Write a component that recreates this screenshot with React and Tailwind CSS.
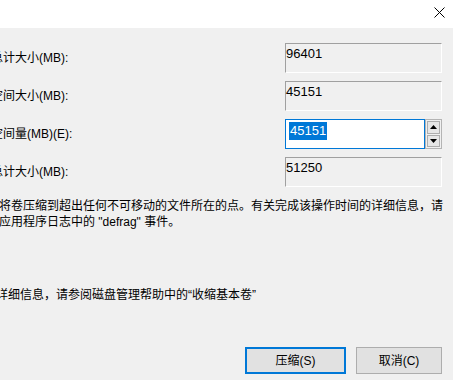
import React from "react";

const font = { fontFamily: '"Liberation Sans", "Noto Sans CJK SC", sans-serif' };

function ReadBox({ value }) {
  return (
    <div className="w-[157px] h-[30px] bg-[#f0f0f0] border-t border-l border-b border-r border-t-[#a0a0a0] border-l-[#a0a0a0] border-b-white border-r-white pl-[0px] text-[13px] leading-[16px] pt-[2px] text-black">
      {value}
    </div>
  );
}

function SpinBox() {
  return (
    <div className="w-[157px] h-[30px] flex">
      <div className="w-[140px] h-[30px] bg-white border border-[#0078d7] pl-[3px] pt-[1px] text-[13px]">
        <span className="bg-[#0078d7] text-white inline-block leading-[18px] px-[1px]">45151</span>
      </div>
      <div className="w-[17px] h-[30px] border border-[#b4b4b4] bg-[#f0f0f0] p-[1px] flex flex-col gap-[1px]">
        <div className="flex-1 bg-[#e6e6e6] border border-[#adadad] flex items-center justify-center">
          <svg width="7" height="4" viewBox="0 0 7 4"><path d="M0 4 L3.5 0 L7 4 Z" fill="#000" /></svg>
        </div>
        <div className="flex-1 bg-[#e6e6e6] border border-[#adadad] flex items-center justify-center">
          <svg width="7" height="4" viewBox="0 0 7 4"><path d="M0 0 L3.5 4 L7 0 Z" fill="#000" /></svg>
        </div>
      </div>
    </div>
  );
}

function Row({ label, children }) {
  return (
    <div className="flex items-center h-[30px]">
      <div className="flex-1 overflow-hidden">
        <div className="ml-[-57px] whitespace-nowrap text-[12px] leading-[16px] text-black">{label}</div>
      </div>
      {children}
    </div>
  );
}

export default function App() {
  return (
    <div className="w-[453px] h-[392px] overflow-hidden bg-white text-black" style={font}>
      <div className="h-[28px] bg-white flex justify-end items-start pt-[7px] pr-[8px]">
        <svg width="11" height="11" viewBox="0 0 11 11">
          <path d="M0.5 0.5 L10.5 10.5 M10.5 0.5 L0.5 10.5" stroke="#000" strokeWidth="1" />
        </svg>
      </div>
      <div className="h-[352px] bg-[#f0f0f0] pt-[15px] pr-[11px] flex flex-col overflow-hidden">
        <div className="flex flex-col gap-[8px]">
          <Row label="压缩前的总计大小(MB):"><ReadBox value="96401" /></Row>
          <Row label="可用压缩空间大小(MB):"><ReadBox value="45151" /></Row>
          <Row label="输入压缩空间量(MB)(E):"><SpinBox /></Row>
          <Row label="压缩后的总计大小(MB):"><ReadBox value="51250" /></Row>
        </div>
        <div className="mt-[11px] text-[12px] leading-[16px] whitespace-nowrap ml-[-25px]">
          <div>无法将卷压缩到超出任何不可移动的文件所在的点。有关完成该操作时间的详细信息，请</div>
          <div>查看应用程序日志中的 "defrag" 事件。</div>
        </div>
        <div className="mt-[57px] text-[12px] leading-[16px] whitespace-nowrap ml-[-28px]">
          有关详细信息，请参阅磁盘管理帮助中的“收缩基本卷”
        </div>
        <div className="mt-[44px] flex justify-end gap-[10px]">
          <button className="w-[101px] h-[27px] bg-[#e1e1e1] border-2 border-[#0078d7] text-[12px] leading-[16px]">压缩(S)</button>
          <button className="w-[86px] h-[27px] bg-[#e1e1e1] border border-[#adadad] text-[12px] leading-[16px]">取消(C)</button>
        </div>
      </div>
    </div>
  );
}
